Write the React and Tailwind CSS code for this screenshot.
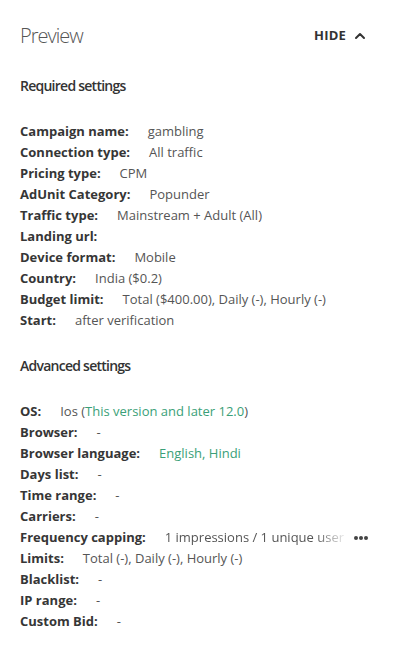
import { ChevronUp } from "lucide-react";

const required = [
  ["Campaign name:", "gambling"],
  ["Connection type:", "All traffic"],
  ["Pricing type:", "CPM"],
  ["AdUnit Category:", "Popunder"],
  ["Traffic type:", "Mainstream + Adult (All)"],
  ["Landing url:", ""],
  ["Device format:", "Mobile"],
  ["Country:", "India ($0.2)"],
  ["Budget limit:", "Total ($400.00), Daily (-), Hourly (-)"],
  ["Start:", "after verification"],
];

function Row({ label, children }) {
  return (
    <div className="flex items-center h-[21px] whitespace-nowrap">
      <span className="font-bold text-[#363636] mr-[19px]">{label}</span>
      {children}
    </div>
  );
}

export default function App() {
  return (
    <div
      className="w-[395px] h-[660px] bg-white px-5 text-[13px] overflow-hidden"
      style={{ fontFamily: "'Open Sans', 'Noto Sans', sans-serif" }}
    >
      {/* header */}
      <div className="flex items-center justify-between pt-[23px] pr-[7px]">
        <h2 className="text-[20px] font-light text-[#555] leading-[26px] tracking-[-1px]">Preview</h2>
        <button className="flex items-center gap-[6px] text-[13px] font-bold text-[#333] tracking-[0.2px]">
          HIDE
          <ChevronUp size={16} strokeWidth={3} />
        </button>
      </div>

      <h3 className="mt-[27px] text-[14px] font-semibold text-[#333] leading-[20px] tracking-[-0.75px]">Required settings</h3>

      <div className="mt-[25px] text-[#555]">
        {required.map(([l, v]) => (
          <Row key={l} label={l}>
            <span>{v}</span>
          </Row>
        ))}
      </div>

      <h3 className="mt-[25px] text-[14px] font-semibold text-[#333] leading-[20px] tracking-[-0.75px]">Advanced settings</h3>

      <div className="mt-[25px] text-[#555]">
        <Row label="OS:">
          <span>
            Ios (<span className="text-[#3a9f78]">This version and later 12.0</span>)
          </span>
        </Row>
        <Row label="Browser:"><span>-</span></Row>
        <Row label="Browser language:">
          <span className="text-[#3a9f78]">English, Hindi</span>
        </Row>
        <Row label="Days list:"><span>-</span></Row>
        <Row label="Time range:"><span>-</span></Row>
        <Row label="Carriers:"><span>-</span></Row>
        <Row label="Frequency capping:">
          <span
            className="overflow-hidden w-[183px]"
            style={{ WebkitMaskImage: "linear-gradient(to right, #000 82%, transparent)" }}
          >
            1 impressions / 1 unique user
          </span>
          <span className="ml-[6px] flex gap-[1px]">
            <span className="w-[4px] h-[4px] rounded-full bg-[#444]" />
            <span className="w-[4px] h-[4px] rounded-full bg-[#444]" />
            <span className="w-[4px] h-[4px] rounded-full bg-[#444]" />
          </span>
        </Row>
        <Row label="Limits:"><span>Total (-), Daily (-), Hourly (-)</span></Row>
        <Row label="Blacklist:"><span>-</span></Row>
        <Row label="IP range:"><span>-</span></Row>
        <Row label="Custom Bid:"><span>-</span></Row>
      </div>
    </div>
  );
}
